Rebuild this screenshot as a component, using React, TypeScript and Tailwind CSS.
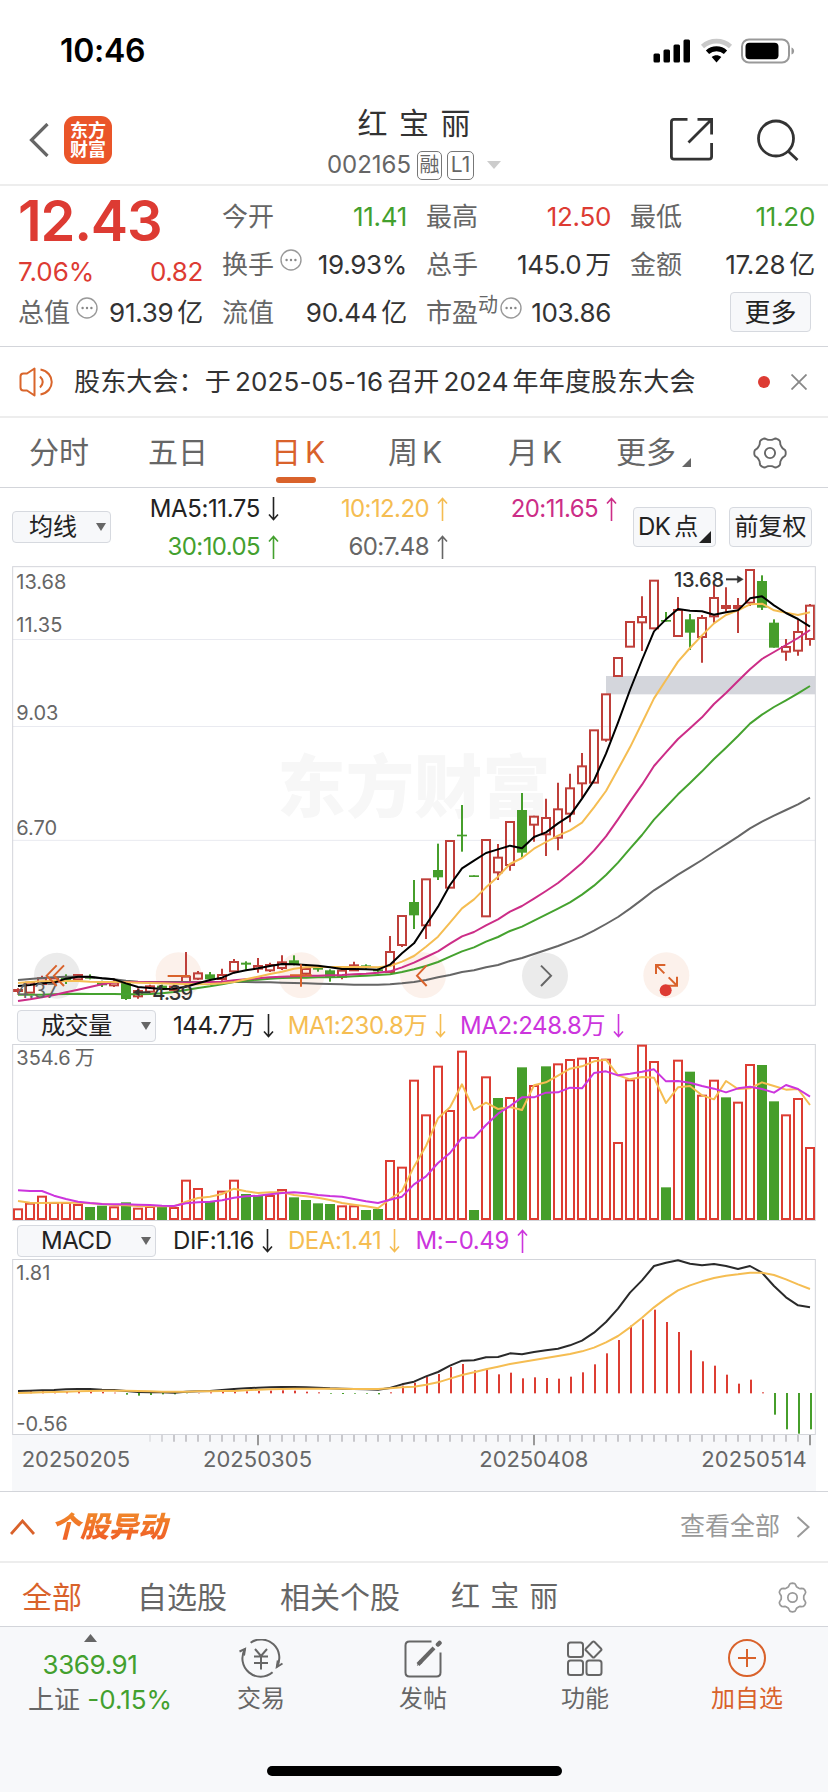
import React from 'react';

const UP = '#bf3f3a';
const DOWN = '#469e2b';
const VOL_UP = '#dd3d33';

// one entry per trading day: colour, high, body top, body bottom, low
const candles: [string, number, number, number, number][] = [
  ['r', 1285, 1290, 1293, 1300], ['r', 1268, 1268, 1298, 1298], ['r', 1247, 1255, 1272, 1274],
  ['r', 1250, 1255, 1265, 1268], ['g', 1243, 1252, 1262, 1272], ['r', 1243, 1245, 1258, 1262],
  ['g', 1243, 1250, 1256, 1258], ['g', 1262, 1267, 1276, 1281], ['r', 1255, 1268, 1276, 1281],
  ['g', 1268, 1268, 1317, 1320], ['r', 1285, 1293, 1309, 1316], ['r', 1274, 1279, 1295, 1300],
  ['g', 1274, 1277, 1287, 1290], ['r', 1274, 1280, 1290, 1292], ['r', 1176, 1250, 1266, 1268],
  ['r', 1233, 1240, 1256, 1260], ['g', 1236, 1243, 1258, 1260], ['r', 1226, 1245, 1257, 1262],
  ['r', 1197, 1206, 1234, 1240], ['g', 1204, 1208, 1214, 1229], ['r', 1194, 1218, 1226, 1238],
  ['r', 1208, 1215, 1231, 1236], ['r', 1186, 1207, 1224, 1230], ['g', 1186, 1201, 1214, 1216],
  ['r', 1220, 1227, 1241, 1246], ['g', 1220, 1224, 1229, 1235], ['g', 1228, 1231, 1251, 1265],
  ['r', 1228, 1232, 1250, 1258], ['r', 1205, 1216, 1231, 1233], ['g', 1213, 1216, 1224, 1226],
  ['g', 1225, 1228, 1234, 1240], ['r', 1128, 1176, 1236, 1238], ['r', 1067, 1068, 1155, 1161],
  ['g', 960, 1026, 1066, 1107], ['r', 958, 958, 1096, 1137], ['g', 851, 930, 952, 960],
  ['r', 843, 843, 983, 983], ['g', 735, 824, 829, 875], ['g', 946, 946, 951, 951],
  ['r', 837, 840, 1069, 1069], ['r', 852, 893, 937, 960], ['r', 786, 786, 915, 932],
  ['g', 699, 750, 878, 892], ['r', 767, 770, 794, 845], ['r', 716, 774, 823, 888],
  ['r', 668, 748, 833, 871], ['r', 641, 685, 761, 787], ['r', 579, 619, 670, 713],
  ['r', 511, 511, 668, 668], ['r', 403, 403, 539, 545], ['r', 294, 294, 348, 348],
  ['r', 186, 186, 260, 260], ['r', 109, 171, 187, 273], ['r', 62, 62, 205, 208],
  ['g', 156, 180, 185, 185], ['r', 111, 150, 228, 228], ['g', 162, 178, 218, 270],
  ['r', 165, 174, 231, 308], ['r', 72, 114, 169, 188], ['r', 82, 138, 144, 155],
  ['r', 114, 138, 144, 219], ['r', 30, 30, 128, 138], ['g', 46, 63, 143, 150],
  ['g', 178, 188, 263, 263], ['r', 237, 261, 275, 302], ['r', 180, 216, 272, 287],
  ['r', 132, 137, 237, 257],
];

const ma5 = [
  1278, 1275, 1270, 1268, 1256, 1250, 1250, 1255, 1258, 1270, 1281, 1284, 1287, 1286, 1280, 1270, 1260, 1253, 1238,
  1231, 1225, 1218, 1212, 1213, 1215, 1217, 1222, 1227, 1227, 1228, 1229, 1214, 1180, 1150, 1095, 1040, 975, 925, 902,
  879, 868, 857, 865, 831, 817, 790, 767, 716, 661, 581, 488, 390, 300, 214, 178, 147, 152, 154, 164, 157, 151, 115,
  109, 136, 159, 177, 200,
];
const ma10 = [
  1269, 1266, 1264, 1263, 1263, 1263, 1265, 1266, 1266, 1267, 1268, 1269, 1270, 1271, 1272, 1273, 1272, 1270, 1266,
  1258, 1250, 1242, 1235, 1226, 1222, 1221, 1221, 1221, 1221, 1221, 1222, 1218, 1205, 1188, 1160, 1130, 1088, 1045,
  1018, 982, 950, 912, 894, 866, 846, 827, 811, 788, 742, 693, 628, 562, 489, 415, 360, 305, 264, 226, 190, 165, 151,
  133, 131, 151, 158, 165, 157,
];
const ma20 = [
  1323, 1318, 1312, 1305, 1297, 1289, 1281, 1273, 1267, 1266, 1266, 1267, 1267, 1268, 1268, 1267, 1266, 1265, 1261,
  1258, 1255, 1252, 1250, 1249, 1247, 1247, 1246, 1245, 1243, 1241, 1238, 1234, 1222, 1208, 1191, 1174, 1151, 1129,
  1116, 1096, 1078, 1055, 1038, 1016, 993, 969, 940, 909, 872, 829, 778, 725, 674, 618, 577, 537, 505, 472, 432, 399,
  363, 328, 297, 276, 255, 234, 210,
];
const ma30 = [
  1304, 1304, 1304, 1303, 1302, 1301, 1302, 1302, 1302, 1303, 1303, 1302, 1300, 1296, 1290, 1284, 1279, 1273, 1266,
  1262, 1259, 1256, 1254, 1253, 1253, 1252, 1252, 1251, 1249, 1247, 1245, 1243, 1236, 1228, 1218, 1206, 1190, 1174,
  1162, 1145, 1131, 1113, 1100, 1082, 1064, 1046, 1027, 1004, 977, 945, 908, 866, 825, 779, 741, 703, 669, 634, 597,
  563, 528, 491, 464, 441, 421, 400, 378,
];
const ma60 = [
  1260, 1257, 1254, 1252, 1250, 1250, 1252, 1255, 1258, 1262, 1265, 1266, 1266, 1266, 1266, 1266, 1266, 1266, 1266,
  1266, 1267, 1267, 1268, 1269, 1270, 1271, 1272, 1273, 1274, 1274, 1274, 1273, 1270, 1266, 1260, 1252, 1245, 1236,
  1231, 1222, 1215, 1203, 1194, 1182, 1170, 1158, 1144, 1130, 1112, 1092, 1071, 1046, 1019, 991, 968, 944, 922, 900,
  876, 853, 830, 805, 785, 767, 750, 733, 713,
];

const volumeTops = [
  928, 911, 890, 909, 909, 915, 921, 917, 922, 907, 926, 921, 919, 924, 842, 867, 904, 875, 842, 882, 887, 888, 870,
  892, 900, 910, 912, 919, 919, 930, 927, 783, 803, 542, 646, 500, 633, 455, 930, 532, 594, 594, 502, 558, 499, 493,
  480, 476, 474, 479, 729, 541, 437, 486, 862, 482, 515, 587, 542, 592, 608, 495, 495, 604, 646, 597, 744,
];
const volumeColors = 'rrrrrrggrgrrgrrrgrrggrrggggrrggrrrrrrrgrgrgrgrrrrrrrrrgrgrrgrrggrrr';
const volMa1 = [
  903, 908, 909, 908, 908, 908, 910, 912, 915, 916, 918, 919, 918, 919, 905, 894, 890, 882, 866, 874, 879, 877, 877,
  885, 889, 893, 900, 909, 914, 919, 925, 897, 873, 800, 738, 655, 622, 553, 630, 608, 627, 621, 630, 556, 547, 527,
  506, 499, 484, 479, 526, 538, 531, 533, 609, 562, 558, 586, 598, 543, 567, 565, 547, 558, 569, 567, 615,
];
const volMa2 = [
  871, 873, 873, 887, 897, 905, 909, 912, 913, 913, 914, 915, 917, 918, 910, 907, 905, 901, 893, 889, 887, 883, 879,
  877, 880, 885, 888, 890, 897, 904, 909, 899, 890, 853, 829, 789, 759, 713, 713, 675, 641, 618, 592, 592, 578, 577,
  563, 565, 519, 514, 526, 521, 515, 508, 544, 543, 548, 558, 566, 577, 565, 560, 567, 578, 555, 567, 590,
];

const dif = [
  528, 527, 526, 525, 523, 522, 522, 524, 525, 528, 531, 532, 532, 533, 530, 529, 528, 525, 522, 520, 518, 517, 516,
  516, 517, 518, 520, 521, 522, 523, 524, 519, 508, 500, 484, 471, 452, 437, 436, 427, 426, 415, 418, 411, 406, 401,
  391, 377, 353, 321, 281, 233, 196, 153, 143, 136, 146, 151, 147, 153, 162, 153, 173, 213, 247, 271, 277,
];
const dea = [
  534, 533, 532, 531, 530, 529, 528, 527, 527, 527, 528, 529, 530, 530, 530, 529, 529, 528, 528, 526, 524, 523, 522,
  521, 521, 521, 521, 521, 522, 522, 522, 520, 517, 515, 509, 502, 491, 480, 472, 463, 455, 447, 441, 435, 429, 423,
  417, 409, 398, 382, 363, 337, 308, 277, 250, 226, 211, 199, 189, 182, 178, 173, 173, 180, 193, 208, 222,
];
const macdBars = [
  8, 8, 7, 7, 7, 6, 5, 4, 2, -5, -8, -6, -4, -4, -1, 1, 3, 4, 5, 6, 7, 8, 9, 8, 5, 3, -2, -3, -2, -2, -4, 3, 23, 32,
  50, 58, 79, 88, 69, 71, 57, 62, 45, 48, 46, 44, 50, 63, 87, 120, 160, 203, 222, 251, 214, 184, 129, 96, 83, 56, 29,
  41, 3, -65, -109, -122, -109,
];

const barX = (i: number) => 54 + i * 36;
const toPoints = (ys: number[]) => ys.map((y, i) => `${barX(i)},${y}`).join(' ');

const Line = ({ ys, color, width = 6 }: { ys: number[]; color: string; width?: number }) => (
  <polyline points={toPoints(ys)} fill="none" stroke={color} strokeWidth={width} strokeLinejoin="round" />
);

// small gap wherever latin text or digits meet Chinese characters
const Spaced = ({ text }: { text: string }) => (
  <>
    {text.split(/([\x20-\x7e]+)/).filter(Boolean).map((part, i) => (
      <span key={i} className={i > 0 ? 'ml-1' : ''}>{part}</span>
    ))}
  </>
);

const gearPath = (r: number, amp: number, phase: number) => {
  const pts: string[] = [];
  for (let d = 0; d < 360; d += 5) {
    const a = (d * Math.PI) / 180;
    const rr = r + amp * Math.tanh(1.8 * Math.cos(6 * (a - phase)));
    pts.push(`${(20 + rr * Math.cos(a)).toFixed(2)} ${(20 + rr * Math.sin(a)).toFixed(2)}`);
  }
  return `M${pts.join('L')}Z`;
};

const Gear = ({ color, size, phase, amp }: { color: string; size: number; phase: number; amp: number }) => (
  <svg width={size} height={size} viewBox="0 0 40 40" fill="none" stroke={color} strokeWidth="2.2" strokeLinejoin="round">
    <path d={gearPath(18.6 - amp, amp, phase)} />
    <circle cx="20" cy="20" r="6" />
  </svg>
);

const Arrow = ({ up }: { up?: boolean }) => (
  <svg
    className={up ? 'ml-2 inline-block' : 'ml-2 inline-block rotate-180'}
    width="11"
    height="24"
    viewBox="0 0 11 24"
    fill="none"
    stroke="currentColor"
    strokeWidth="1.6"
  >
    <path d="M5.5 24V1.5M1 6.5L5.5 1.5L10 6.5" />
  </svg>
);

const Dots = ({ className = 'ml-1.5' }: { className?: string }) => (
  <svg className={`mb-2 shrink-0 ${className}`} width="22" height="22" viewBox="0 0 22 22">
    <circle cx="11" cy="11" r="10" fill="none" stroke="#999" strokeWidth="1.4" />
    <circle cx="6.6" cy="11" r="1.2" fill="#888" />
    <circle cx="11" cy="11" r="1.2" fill="#888" />
    <circle cx="15.4" cy="11" r="1.2" fill="#888" />
  </svg>
);

const Quote = ({ label, value, tone = 'text-[#333]', children }: {
  label: string;
  value: string;
  tone?: string;
  children?: React.ReactNode;
}) => (
  <div className="flex h-12 items-center whitespace-nowrap">
    <span className="text-[#666]">{label}</span>
    {children}
    <span className={`ml-auto tracking-[-0.3px] ${tone}`}><Spaced text={value} /></span>
  </div>
);

const Caret = () => (
  <svg width="10" height="8" viewBox="0 0 10 8">
    <path d="M0 0H10L5 8Z" fill="#666" />
  </svg>
);

const Picker = ({ label }: { label: string }) => (
  <div className="flex h-8 w-[139px] shrink-0 items-center justify-between rounded border-[1.5px] border-[#d6d9df] bg-[#f7f8fa] pr-1 pl-[23px] text-2xl text-[#222]">
    <span>{label}</span>
    <Caret />
  </div>
);

const StatusBar = () => (
  <div className="flex h-[88px] shrink-0 items-center justify-between pt-[13px] pr-[33px] pl-[60px]">
    <span className="text-[32px] font-semibold tracking-[-0.3px] text-black">10:46</span>
    <svg width="142" height="26" viewBox="0 0 142 26">
      <rect x="0.5" y="15.5" width="6.5" height="9" rx="1.5" />
      <rect x="10.5" y="11.5" width="6.5" height="13" rx="1.5" />
      <rect x="20.5" y="6.5" width="6.5" height="18" rx="1.5" />
      <rect x="30.5" y="1.5" width="6.5" height="23" rx="1.5" />
      <path d="M49.5 8.5C57.5 1.3 69.5 1.3 77.5 8.5" fill="none" stroke="#c9c9c9" strokeWidth="4.6" />
      <path d="M54.5 14.2C59.5 9.6 67.5 9.6 72.5 14.2" fill="none" stroke="#000" strokeWidth="4.8" />
      <path d="M58.7 19.1C61.5 16.6 65.5 16.6 68.3 19.1L63.5 24.5Z" />
      <rect x="89" y="1.5" width="47" height="23" rx="7" fill="none" stroke="#999" strokeWidth="2" />
      <rect x="92.5" y="4.8" width="33" height="16.5" rx="4" />
      <path d="M138.5 9.5C142 10.5 142 15.5 138.5 16.5Z" fill="#999" />
    </svg>
  </div>
);

const Header = () => (
  <div className="flex h-[98px] shrink-0 items-center border-b-2 border-[#ededed] pr-[29px] pl-[29px]">
    <div className="flex w-[240px] items-center pt-[7px]">
      <svg width="20" height="34" viewBox="0 0 20 34" fill="none" stroke="#666" strokeWidth="3.2">
        <path d="M18.5 1L2.5 17L18.5 33" />
      </svg>
      <div className="ml-[15px] flex h-12 w-12 flex-col items-center justify-center rounded-[11px] bg-[#ea5529] text-[18px] leading-[19px] font-bold text-white">
        <span>东方</span>
        <span>财富</span>
      </div>
    </div>
    <div className="flex grow flex-col items-center pt-3">
      <div className="text-[30px] leading-[38px] text-[#333] [word-spacing:3px]">红 宝 丽</div>
      <div className="mt-2 flex h-[30px] items-center text-[#666]">
        <span className="text-[24px]">002165</span>
        <span className="ml-1.5 flex h-[29px] w-[25px] items-center justify-center rounded-[5px] border-[1.5px] border-[#777] text-[20px]">融</span>
        <span className="ml-[5px] flex h-[29px] w-[27px] items-center justify-center rounded-[5px] border-[1.5px] border-[#777] text-[21px]">L1</span>
        <svg className="ml-[13px]" width="14" height="8" viewBox="0 0 14 8">
          <path d="M0 0H14L7 8Z" fill="#ccc" />
        </svg>
      </div>
    </div>
    <div className="flex w-[240px] items-center justify-end gap-11 pt-[7px]">
      <svg width="43" height="43" viewBox="0 0 43 43" fill="none" stroke="#333" strokeWidth="2.8">
        <path d="M17.5 1.4H4Q1.4 1.4 1.4 4V38.5Q1.4 41.2 4 41.2H39Q41.6 41.2 41.6 38.5V25" />
        <path d="M27.5 1.4H41.6V16.5M41 2L18.5 24.5" />
      </svg>
      <svg width="42" height="42" viewBox="0 0 42 42" fill="none" stroke="#333" strokeWidth="2.8">
        <circle cx="19" cy="19.5" r="17.5" />
        <path d="M31 32L40.5 41" />
      </svg>
    </div>
  </div>
);

const QuotePanel = () => (
  <div className="grid h-[161px] shrink-0 grid-cols-4 gap-x-[19px] border-b-[1.5px] border-[#d3d5da] pt-1.5 pr-[13px] pl-[18px] text-[26px]">
    <div className="flex flex-col text-[#dd3b33]">
      <div className="h-[58px] text-[56px] leading-[58px] font-semibold tracking-[-1.2px]">12.43</div>
      <div className="flex h-[38px] items-center justify-between pt-[5px]">
        <span>7.06%</span>
        <span className="tracking-[-0.4px]">0.82</span>
      </div>
      <Quote label="总值" value="91.39亿"><Dots /></Quote>
    </div>
    <div>
      <Quote label="今开" value="11.41" tone="text-[#43a02e]" />
      <Quote label="换手" value="19.93%"><Dots /></Quote>
      <Quote label="流值" value="90.44亿" />
    </div>
    <div>
      <Quote label="最高" value="12.50" tone="text-[#dd3b33]" />
      <Quote label="总手" value="145.0万" />
      <Quote label="市盈" value="103.86">
        <span className="mb-3.5 text-xl text-[#666]">动</span>
        <Dots className="ml-0.5" />
      </Quote>
    </div>
    <div>
      <Quote label="最低" value="11.20" tone="text-[#43a02e]" />
      <Quote label="金额" value="17.28亿" />
      <div className="mt-1 mr-1 ml-auto flex h-10 w-[81px] items-center justify-center rounded border-[1.5px] border-[#d6d9df] bg-[#f7f8fa] text-[#222]">更多</div>
    </div>
  </div>
);

const Notice = () => (
  <div className="flex h-[71px] shrink-0 items-center border-b-2 border-[#ededed] pr-[21px] pl-[19px]">
    <svg width="35" height="30" viewBox="0 0 35 30" fill="none" stroke="#d9652b" strokeWidth="2">
      <path d="M15.5 1.5V28.5L8 23.5H4.5Q1.5 23.5 1.5 20.5V9.5Q1.5 6.5 4.5 6.5H8L15.5 1.5Z" strokeLinejoin="round" />
      <path d="M21 9.5Q26.5 15 21 20.5M21.5 2.5C36.5 5.5 36.5 24.5 21.5 27.5" />
    </svg>
    <span className="ml-5 text-[26px] tracking-[0.15px] whitespace-nowrap text-[#333]">
      <Spaced text="股东大会：于2025-05-16召开2024年年度股东大会" />
    </span>
    <span className="ml-auto h-3 w-3 rounded-full bg-[#dd3b33]" />
    <svg className="ml-[21px]" width="16" height="16" viewBox="0 0 16 16" stroke="#888" strokeWidth="1.8">
      <path d="M0.5 0.5L15.5 15.5M15.5 0.5L0.5 15.5" />
    </svg>
  </div>
);

const PeriodTabs = () => (
  <div className="flex h-[70px] shrink-0 items-center border-b-[1.5px] border-[#d3d5da] pr-[41px] pl-[29px] text-[30px] whitespace-nowrap text-[#666]">
    <span className="w-[119px]">分时</span>
    <span className="w-[123px]">五日</span>
    <span className="relative w-[117px] text-[#d9622b]">
      <Spaced text="日K" />
      <span className="absolute top-[47px] left-[5px] h-1.5 w-10 rounded-[3px] bg-[#d9622b]" />
    </span>
    <span className="w-[120px]"><Spaced text="周K" /></span>
    <span className="w-[108px]"><Spaced text="月K" /></span>
    <span>更多</span>
    <svg className="mt-5 ml-1.5" width="9" height="9" viewBox="0 0 9 9">
      <path d="M9 0V9H0Z" fill="#666" />
    </svg>
    <span className="ml-auto">
      <Gear color="#666" size={34} phase={0} amp={1.6} />
    </span>
  </div>
);

const MaBar = () => (
  <div className="flex h-[78px] shrink-0 items-center pr-4 pl-3">
    <div className="flex h-8 w-[99px] shrink-0 items-center justify-between rounded border-[1.5px] border-[#d6d9df] bg-[#f7f8fa] pr-1 pl-4 text-2xl text-[#222]">
      均线
      <Caret />
    </div>
    <div className="mt-0.5 grid grid-cols-[168px_169px_169px] gap-y-[2px] text-right text-2xl leading-9 tracking-[-0.6px] whitespace-nowrap [&_svg]:align-[-4px]">
      <span className="tracking-[-0.4px] text-[#222]">MA5:11.75<Arrow /></span>
      <span className="text-[#f5bd52]">10:12.20<Arrow up /></span>
      <span className="text-[#cc2d87]">20:11.65<Arrow up /></span>
      <span className="text-[#43a02e]">30:10.05<Arrow up /></span>
      <span className="text-[#666]">60:7.48<Arrow up /></span>
    </div>
    <div className="ml-auto flex gap-[13px] text-2xl text-[#222]">
      <div className="relative flex h-10 w-[83px] items-center rounded border-[1.5px] border-[#d6d9df] bg-[#f7f8fa] pl-1 tracking-[-0.6px] whitespace-nowrap">
        <Spaced text="DK点" />
        <svg className="absolute right-1 bottom-[3px]" width="12" height="12" viewBox="0 0 12 12">
          <path d="M12 0V12H0Z" fill="#222" />
        </svg>
      </div>
      <div className="flex h-10 w-[83px] items-center justify-center rounded border-[1.5px] border-[#d6d9df] bg-[#f7f8fa]">前复权</div>
    </div>
  </div>
);

const PriceChart = () => (
  <svg className="ml-3 block shrink-0" width="804" height="440" viewBox="36 18 2412 1320">
    <path d="M38 238.5H2446M38 499.5H2446M38 841H2446" stroke="#e9eaf0" strokeWidth="3" />
    <text x="832" y="756" fontSize="205" fontWeight="800" fill="#f7f7f7">东方财富</text>
    <rect x="1818" y="348" width="628" height="55" fill="#d4d6dc" />
    {[536, 904, 1269, 1999].map((cx) => (
      <circle key={cx} cx={cx} cy="1246" r="69" fill="#fcf1eb" />
    ))}
    {[171, 1635].map((cx) => (
      <circle key={cx} cx={cx} cy="1247" r="69" fill="#ebebeb" />
    ))}
    {candles.map(([c, high, top, bottom, low], i) =>
      c === 'g' ? (
        <g key={i} fill={DOWN}>
          <rect x={barX(i) - 3} y={high} width="6" height={low - high} />
          <rect x={barX(i) - 15} y={top} width="30" height={bottom - top} />
        </g>
      ) : (
        <g key={i} fill="none" stroke={UP} strokeWidth="6">
          <path d={`M${barX(i)} ${high}V${top}M${barX(i)} ${bottom}V${low}`} />
          <rect x={barX(i) - 12} y={top} width="24" height={bottom - top} />
        </g>
      ),
    )}
    <Line ys={ma60} color="#666" />
    <Line ys={ma30} color="#45a22f" />
    <Line ys={ma20} color="#cc2d87" />
    <Line ys={ma10} color="#f5bd52" />
    <Line ys={ma5} color="#000" />
    <g fontSize="60" fill="#666">
      <text x="49" y="88">13.68</text>
      <text x="49" y="217">11.35</text>
      <text x="49" y="481">9.03</text>
      <text x="49" y="826">6.70</text>
      <text x="49" y="1314">4.37</text>
    </g>
    <g fontSize="60" fontWeight="500" fill="#333">
      <text x="2022" y="81" textLength="150">13.68</text>
      <text x="457" y="1320" textLength="122">4.39</text>
    </g>
    <g stroke="#333" strokeWidth="6" fill="#333">
      <path d="M2178 58H2222" />
      <path d="M2212 47L2230 58L2212 69Z" strokeWidth="1" />
      <path d="M410 1297H450" />
      <path d="M418 1286L400 1297L418 1308Z" strokeWidth="1" />
    </g>
    <g fill="none" stroke="#d9622b" strokeWidth="6">
      <path d="M170 1216L140 1247L170 1278M192 1216L162 1247L192 1278" />
      <path d="M503 1248H570M870 1246H935M903 1213V1280" />
      <path d="M1280 1216L1251 1247L1280 1278" />
      <path d="M1968 1242V1215H1996M1970 1217L1993 1240M2031 1250V1277H2003M2029 1275L2006 1252" />
    </g>
    <path d="M1623 1217L1653 1247L1623 1278" fill="none" stroke="#666" strokeWidth="6" />
    <circle cx="1997" cy="1291" r="18" fill="#dd3b33" />
    <rect x="38" y="20" width="2408" height="1316" fill="none" stroke="#d3d5da" strokeWidth="3" />
  </svg>
);

const VolumeChart = () => (
  <svg className="ml-3 block shrink-0" width="804" height="177" viewBox="36 432 2412 531">
    <rect x="38" y="433.5" width="2408" height="528" fill="none" stroke="#d3d5da" strokeWidth="3" />
    <g fontSize="60" fill="#666">
      <text x="49" y="495">354.6</text>
      <text x="224" y="495">万</text>
    </g>
    {volumeTops.map((top, i) =>
      volumeColors[i] === 'g' ? (
        <rect key={i} x={barX(i) - 15} y={top} width="30" height={960 - top} fill={DOWN} />
      ) : (
        <rect key={i} x={barX(i) - 12} y={top} width="24" height={957 - top} fill="#fff" stroke={VOL_UP} strokeWidth="6" />
      ),
    )}
    <Line ys={volMa1} color="#f5bd52" />
    <Line ys={volMa2} color="#cc35dd" />
  </svg>
);

const MacdChart = () => (
  <svg className="ml-3 block shrink-0" width="804" height="232" viewBox="36 132 2412 696">
    <rect x="36" y="659" width="2412" height="169" fill="#f7f8fa" />
    <rect x="38" y="133.5" width="2408" height="525" fill="none" stroke="#d3d5da" strokeWidth="3" />
    {macdBars.map((h, i) => (
      <rect
        key={i}
        x={barX(i)}
        y={h > 0 ? 535 - h : 534}
        width="6"
        height={Math.abs(h)}
        fill={h > 0 ? VOL_UP : DOWN}
      />
    ))}
    <Line ys={dif} color="#2a2a2a" />
    <Line ys={dea} color="#f5bd52" />
    {candles.slice(11).map((_, k) => {
      const i = k + 11;
      const major = i === 20 || i === 43 || i === 66;
      return (
        <path
          key={i}
          d={`M${barX(i)} 660V${major ? 691 : 680}`}
          stroke={major ? '#999' : '#c8c8cc'}
          strokeOpacity={i === 11 ? 0.4 : i === 12 ? 0.7 : 1}
          strokeWidth="6"
        />
      );
    })}
    <g fontSize="60" fill="#666">
      <text x="49" y="196">1.81</text>
      <text x="49" y="649">-0.56</text>
    </g>
    <g fontSize="66" fill="#666">
      <text x="65" y="755" textLength="325">20250205</text>
      <text x="609" y="755" textLength="327">20250305</text>
      <text x="1438" y="755" textLength="327">20250408</text>
      <text x="2104" y="755" textLength="316">20250514</text>
    </g>
  </svg>
);

const Movements = () => (
  <>
    <div className="flex h-[72px] shrink-0 items-center border-t-[1.5px] border-b-2 border-t-[#d3d5da] border-b-[#ededed] pr-[18px] pl-[10px]">
      <svg width="25" height="16" viewBox="0 0 25 16" fill="none" stroke="#d9622b" strokeWidth="2.8">
        <path d="M1 15L12.5 2L24 15" />
      </svg>
      <span className="ml-4 bg-gradient-to-b from-[#f08c2a] to-[#ef5426] bg-clip-text pr-2 text-[29px] leading-9 font-black text-transparent italic">
        个股异动
      </span>
      <span className="ml-auto text-[25px] text-[#999]">查看全部</span>
      <svg className="ml-4" width="14" height="22" viewBox="0 0 14 22" fill="none" stroke="#999" strokeWidth="2">
        <path d="M1.5 1L12.5 11L1.5 21" />
      </svg>
    </div>
    <div className="flex h-16 shrink-0 items-center border-b-[1.5px] border-[#d3d5da] pt-[5px] pr-5 pl-[22px] text-[30px] text-[#666]">
      <span className="text-[#d9622b]">全部</span>
      <span className="ml-[55px]">自选股</span>
      <span className="ml-[53px]">相关个股</span>
      <span className="ml-[51px] text-[29px] [word-spacing:2px]">红 宝 丽</span>
      <span className="ml-auto">
        <Gear color="#999" size={31} phase={Math.PI / 6} amp={2.1} />
      </span>
    </div>
  </>
);

const BottomBar = () => (
  <div className="flex grow flex-col bg-[#f7f8fa]">
    <div className="flex text-2xl text-[#666]">
      <div className="flex w-[180px] flex-col items-center pt-[7px]">
        <svg width="13" height="8" viewBox="0 0 13 8">
          <path d="M0 8H13L6.5 0Z" fill="#666" />
        </svg>
        <span className="mt-[5px] text-[26px] leading-9 tracking-[-0.4px] text-[#43a02e]">3369.91</span>
        <span className="mt-px pl-5 text-[26px] leading-8 whitespace-nowrap">
          上证 <span className="text-[#43a02e]">-0.15%</span>
        </span>
      </div>
      <div className="flex w-[162px] flex-col items-center pt-3">
        <svg width="44" height="40" viewBox="0 0 44 40" fill="none" stroke="#666" strokeWidth="2">
          <path d="M11.6 3.7A18.3 18.3 0 0 1 37.8 28M33.6 33.3A18.3 18.3 0 0 1 6 10" />
          <path d="M0.5 12.5L6 10L5 16.500M43.500 24.500L37.800 28L38.800 21.500" />
          <path d="M16 10L22 17L28 10M15 17.500H29M15 24H29M22 17V30.500" />
        </svg>
        <span className="mt-1 leading-8">交易</span>
      </div>
      <div className="flex w-[162px] flex-col items-center pt-3">
        <svg width="38" height="40" viewBox="0 0 38 40" fill="none" stroke="#666" strokeWidth="2">
          <path d="M27.500 2.500H5.500Q1.500 2.500 1.500 6.500V33.500Q1.500 37.500 5.500 37.500H32.500Q36.500 37.500 36.500 33.500V13.500" />
          <path d="M14 25.500L30 8.800" strokeWidth="4" />
          <path d="M12.800 27L18.500 24L15.500 20.800Z" fill="#666" stroke="none" />
          <path d="M34 5.500L35.500 4" strokeWidth="4.500" strokeLinecap="round" />
        </svg>
        <span className="mt-1 leading-8">发帖</span>
      </div>
      <div className="flex w-[162px] flex-col items-center pt-3">
        <svg width="36" height="40" viewBox="0 0 36 40" fill="none" stroke="#666" strokeWidth="2">
          <rect x="1" y="3.500" width="15" height="14.500" rx="2.500" />
          <rect x="1" y="21.500" width="15" height="14.500" rx="2.500" />
          <rect x="19.500" y="21.500" width="15" height="14.500" rx="2.500" />
          <rect x="20.500" y="4.500" width="12" height="12" rx="1.500" transform="rotate(45 26.500 10.500)" />
        </svg>
        <span className="mt-1 leading-8">功能</span>
      </div>
      <div className="flex w-[162px] flex-col items-center pt-3 text-[#d9622b]">
        <svg width="40" height="40" viewBox="0 0 40 40" fill="none" stroke="currentColor" strokeWidth="2">
          <circle cx="20" cy="19" r="18" />
          <path d="M11 19H29M20 10V28" />
        </svg>
        <span className="mt-1 leading-8">加自选</span>
      </div>
    </div>
    <div className="mx-auto mt-auto mb-4 h-2.5 w-[295px] rounded-full bg-black" />
  </div>
);

function App() {
  return (
    <div className="flex h-[1792px] w-[828px] flex-col overflow-hidden bg-white font-['Inter','Noto_Sans_CJK_SC',sans-serif] font-normal">
      <StatusBar />
      <Header />
      <QuotePanel />
      <Notice />
      <PeriodTabs />
      <MaBar />
      <PriceChart />
      <div className="flex h-[38px] shrink-0 items-center pt-0.5 pl-[17px] text-2xl tracking-[-0.4px] whitespace-nowrap [&_svg]:align-[-4px]">
        <Picker label="成交量" />
        <span className="ml-[17px] text-[#222]">144.7万<Arrow /></span>
        <span className="ml-3.5 text-[#f5bd52]">MA1:230.8万<Arrow /></span>
        <span className="ml-3.5 text-[#cc35dd]">MA2:248.8万<Arrow /></span>
      </div>
      <VolumeChart />
      <div className="flex h-[38px] shrink-0 items-center pt-0.5 pl-[17px] text-2xl tracking-[-0.4px] whitespace-nowrap [&_svg]:align-[-4px]">
        <Picker label="MACD" />
        <span className="ml-[17px] text-[#222]">DIF:1.16<Arrow /></span>
        <span className="ml-[15px] text-[#f5bd52]">DEA:1.41<Arrow /></span>
        <span className="ml-[15px] text-[#cc35dd]">M:−0.49<Arrow up /></span>
      </div>
      <MacdChart />
      <Movements />
      <BottomBar />
    </div>
  );
}

export default App;
